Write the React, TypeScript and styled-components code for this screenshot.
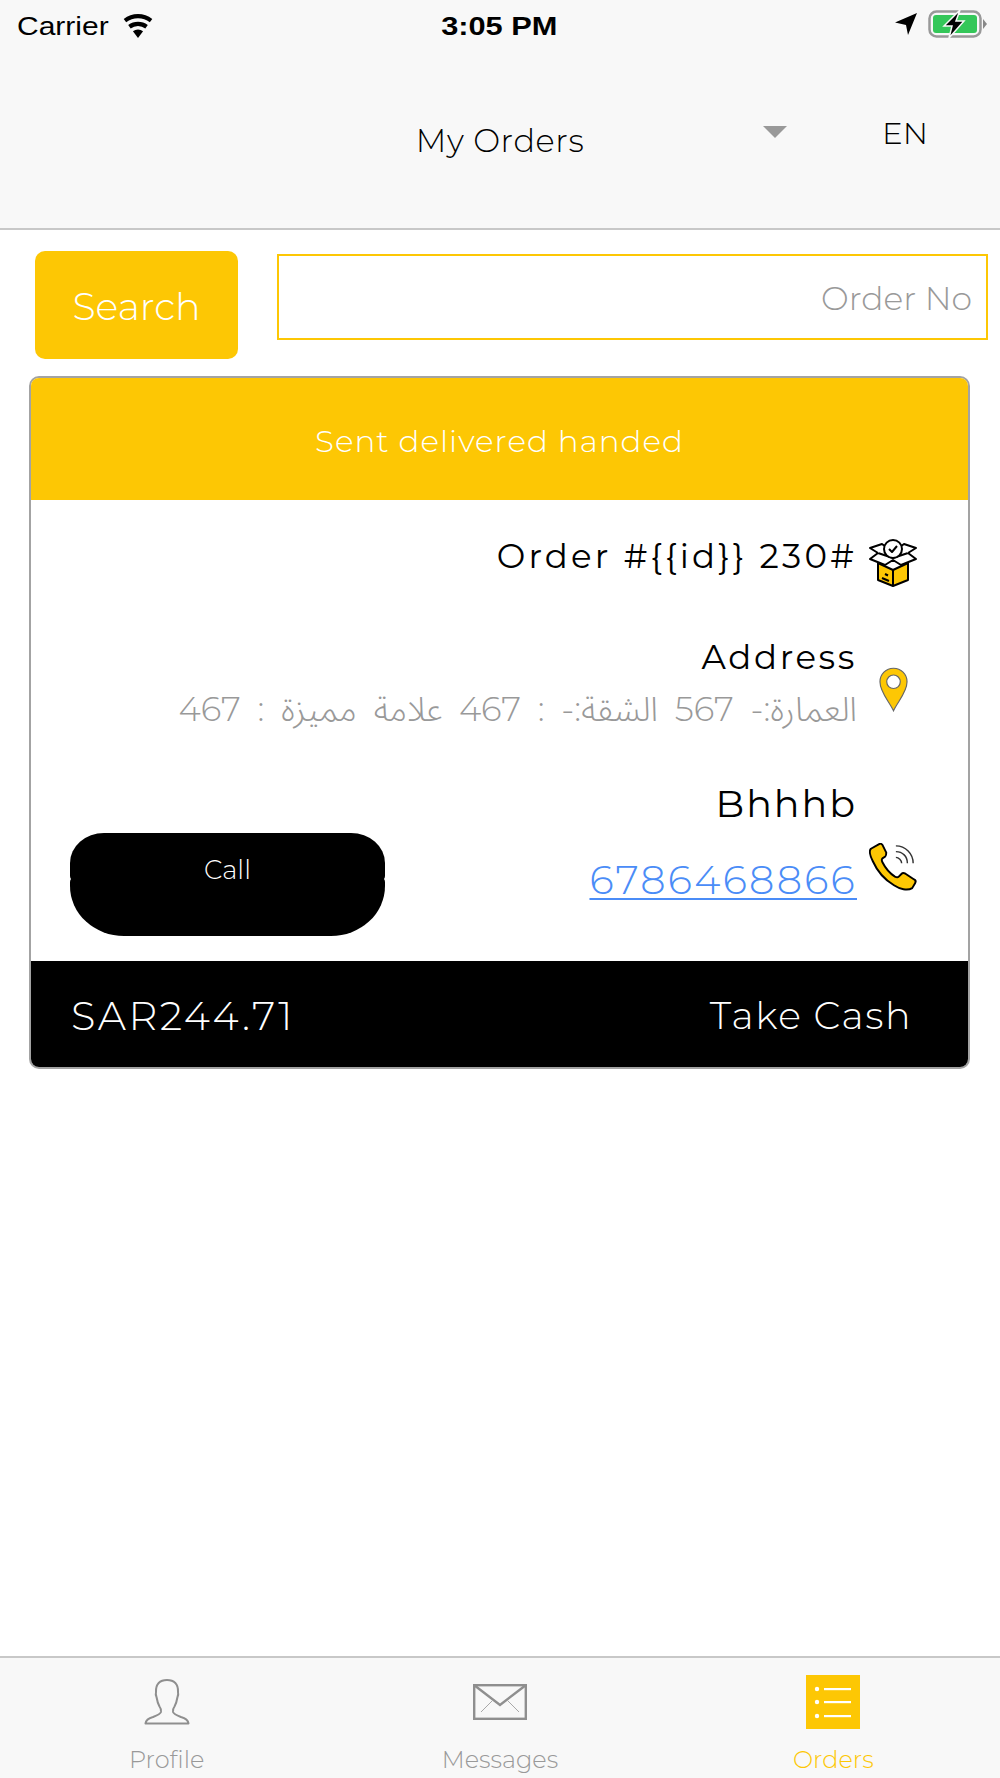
import React, { FC } from "react";
import styled, { createGlobalStyle } from "styled-components";

const YELLOW = "#fdc704";

const GlobalStyle = createGlobalStyle`
  html, body { margin: 0; padding: 0; background: #fff; }
  * { box-sizing: border-box; }
`;

const Page = styled.div`
  width: 1000px;
  height: 1778px;
  display: flex;
  flex-direction: column;
  font-family: "Montserrat", "Inter", "Noto Sans", "Noto Sans Arabic", "DejaVu Sans", sans-serif;
  font-weight: 300;
  color: #000;
  background: #fff;
  overflow: hidden;
`;

const TopArea = styled.header`
  height: 230px;
  background: #f8f8f8;
  border-bottom: 2px solid #c8c8c8;
  flex-shrink: 0;
`;

const StatusBar = styled.div`
  height: 52px;
  padding: 0 13px 0 17px;
  display: grid;
  grid-template-columns: 1fr auto 1fr;
  align-items: center;
  font-family: "Liberation Sans", Arial, sans-serif;
  font-weight: 400;
  font-size: 25px;
  svg { margin-bottom: 4px; display: block; }
`;

const StatusLeft = styled.div`
  display: flex;
  align-items: center;
  gap: 27px;
`;

const Carrier = styled.span`
  transform: scaleX(1.2);
  transform-origin: left center;
`;

const StatusTime = styled.div`
  font-weight: 700;
  transform: scaleX(1.23);
  margin-right: 5px;
`;

const StatusRight = styled.div`
  display: flex;
  justify-content: flex-end;
  align-items: center;
  gap: 11px;
`;

const NavBar = styled.div`
  position: relative;
  height: 176px;
`;

const NavTitle = styled.div`
  text-align: center;
  font-size: 32px;
  padding-top: 73px;
  letter-spacing: 0.6px;
  line-height: 1;
`;

const Caret = styled.span`
  position: absolute;
  left: 763px;
  top: 74px;
  border-left: 12.5px solid transparent;
  border-right: 12.5px solid transparent;
  border-top: 12px solid #999;
`;

const Lang = styled.span`
  position: absolute;
  left: 882px;
  top: 66px;
  font-size: 31px;
  line-height: 1;
`;

const SearchRow = styled.div`
  display: flex;
  align-items: flex-start;
  padding: 21px 12px 0 35px;
  gap: 39px;
`;

const SearchButton = styled.button`
  width: 203px;
  height: 108px;
  border: none;
  border-radius: 10px;
  background: ${YELLOW};
  color: #fff;
  font: inherit;
  font-size: 38px;
  padding: 2px 0 0;
`;

const SearchInput = styled.div`
  flex: 1;
  height: 86px;
  margin-top: 3px;
  border: 2px solid ${YELLOW};
  display: flex;
  align-items: center;
  justify-content: flex-end;
  padding: 2px 14px 0 0;
  color: #999;
  font-size: 33px;
`;

const Card = styled.section`
  margin: 17px 30px 0 29px;
  height: 693px;
  border: 2px solid #a3a3a3;
  border-radius: 10px;
  overflow: hidden;
  display: flex;
  flex-direction: column;
`;

const CardStatus = styled.div`
  height: 122px;
  background: ${YELLOW};
  color: #fff;
  display: flex;
  align-items: center;
  justify-content: center;
  font-size: 31px;
  letter-spacing: 1px;
  padding-top: 3px;
  flex-shrink: 0;
`;

const CardBody = styled.div`
  flex: 1;
  display: flex;
  flex-direction: column;
  padding-right: 51px;
`;

const InfoRow = styled.div<{ $h: number }>`
  height: ${(p) => p.$h}px;
  display: flex;
  justify-content: flex-end;
  align-items: flex-start;
`;

const InfoText = styled.div`
  display: flex;
  flex-direction: column;
  align-items: flex-end;
`;

const OrderNo = styled.div`
  font-size: 34px;
  font-weight: 400;
  letter-spacing: 3.2px;
  margin-top: 36px;
  line-height: 40px;
`;

const AddressTitle = styled.div`
  font-size: 34px;
  font-weight: 400;
  letter-spacing: 2.6px;
  line-height: 40px;
`;

const AddressLine = styled.div`
  direction: rtl;
  font-size: 34px;
  color: #999;
  letter-spacing: 2px;
  word-spacing: 8px;
  line-height: 48px;
  margin-top: 8px;
`;

const IconSlot = styled.div<{ $top: number; $right?: number }>`
  width: 60px;
  display: flex;
  justify-content: flex-end;
  padding-top: ${(p) => p.$top}px;
  padding-right: ${(p) => p.$right || 0}px;
`;

const PersonName = styled.div`
  font-size: 38px;
  font-weight: 400;
  letter-spacing: 2px;
  line-height: 48px;
  margin-top: 2px;
`;

const PhoneLink = styled.a`
  font-size: 40px;
  color: #4a8cf7;
  letter-spacing: 2.3px;
  text-decoration: underline;
  text-underline-offset: 4px;
  text-decoration-thickness: 2px;
  line-height: 48px;
  margin-top: 28px;
`;

const ContactRow = styled.div`
  display: flex;
  align-items: flex-start;
  justify-content: space-between;
  padding-left: 39px;
`;

const CallButton = styled.div`
  position: relative;
  width: 315px;
  height: 103px;
  margin-top: 55px;
  color: #fff;
  font-size: 26px;
  text-align: center;
  line-height: 74px;

  &::before, &::after {
    content: "";
    position: absolute;
    left: 0;
    right: 0;
    background: #000;
  }
  &::before { top: 0; height: 48px; border-radius: 34px 34px 5px 5px / 30px 30px 5px 5px; }
  &::after { top: 44px; bottom: 0; border-radius: 5px 5px 54px 54px / 5px 5px 50px 50px; }
`;

const CallLabel = styled.span`
  position: relative;
  z-index: 1;
`;

const CardFooter = styled.div`
  height: 106px;
  background: #000;
  color: #fff;
  display: flex;
  align-items: center;
  justify-content: space-between;
  padding: 3px 56px 0 40px;
  flex-shrink: 0;
`;

const Amount = styled.span`
  font-size: 40px;
  letter-spacing: 2.500px;
`;

const PayMethod = styled.span`
  font-size: 38px;
  letter-spacing: 1.500px;
`;

const Spacer = styled.div`
  flex: 1;
`;

const TabBar = styled.nav`
  height: 122px;
  background: #f8f8f8;
  border-top: 2px solid #c8c8c8;
  display: flex;
  flex-shrink: 0;
`;

const Tab = styled.div<{ $active?: boolean }>`
  flex: 1;
  display: flex;
  flex-direction: column;
  align-items: center;
  color: ${(p) => (p.$active ? YELLOW : "#999")};
  font-size: 24px;
`;

const TabIcon = styled.div`
  height: 88px;
  display: flex;
  align-items: center;
  justify-content: center;
`;

const TabLabel = styled.span`
  line-height: 32px;
  margin-top: -2px;
`;

const WifiIcon: FC = () => (
  <svg width="36" height="27" viewBox="0 0 30 24">
    <path d="M15 24l-4.500-6a7 7 0 0 1 9 0z" fill="#000" />
    <path d="M8.500 15.500a10.500 10.500 0 0 1 13 0l2.200-3a14.500 14.500 0 0 0-17.400 0z" fill="#000" />
    <path d="M4.500 10a17 17 0 0 1 21 0l2.200-3a20.500 20.500 0 0 0-25.400 0z" fill="#000" />
  </svg>
);

const ArrowIcon: FC = () => (
  <svg width="22" height="22" viewBox="0 0 22 22">
    <path d="M22 0L13 22l-2-10L0 9.500z" fill="#000" />
  </svg>
);

const BatteryIcon: FC = () => (
  <svg width="59" height="28" viewBox="0 0 59 28">
    <rect x="1.500" y="1.500" width="51" height="25" rx="7" fill="none" stroke="#999" strokeWidth="2.500" />
    <rect x="5" y="5" width="44" height="18" rx="3" fill="#34c759" />
    <path d="M55 9l4 5-4 5z" fill="#888" />
    <path d="M32 0L16 16h8l-3 12 15-17h-8z" fill="#000" stroke="#f8f8f8" strokeWidth="1.500" />
  </svg>
);

const BoxIcon: FC = () => (
  <svg width="48" height="48" viewBox="0 0 48 48" strokeLinejoin="round">
    <path d="M9 24l15 7 15-7v17l-15 6-15-6z" fill={YELLOW} stroke="#000" strokeWidth="2" />
    <path d="M24 31v16" stroke="#000" strokeWidth="2" />
    <path d="M24 19L9 14 1 20l15 6 8-5 8 5 15-6-8-6z" fill="#fff" stroke="#000" strokeWidth="2" />
    <path d="M9 14L1 9l12-4 4 3M39 14l8-5-12-4-4 3" fill="#fff" stroke="#000" strokeWidth="2" />
    <circle cx="24" cy="10" r="9" fill="#fff" stroke="#000" strokeWidth="2" />
    <path d="M20 10l3 3 5-6" fill="none" stroke="#000" strokeWidth="2" />
    <path d="M13 39l7 3M16 35l3 1.500" stroke="#000" strokeWidth="2" />
  </svg>
);

const PinIcon: FC = () => (
  <svg width="29" height="45" viewBox="0 0 30 46">
    <path d="M15 45C11 36 1 26 1 15a14 14 0 0 1 28 0c0 11-10 21-14 30z" fill={YELLOW} stroke="#666" strokeWidth="1.200" />
    <circle cx="15" cy="15" r="7" fill="#fff" stroke="#666" strokeWidth="1.200" />
  </svg>
);

const PhoneIcon: FC = () => (
  <svg width="48" height="48" viewBox="0 0 50 50">
    <path d="M11 1L2 6C0 8 1 13 4 19c4 9 12 19 22 25 6 4 14 6 19 3l3-5c1-2 1-3-1-4l-9-6c-2-1-3-1-4 0l-3 3c-1 1-2 1-4 0-6-4-10-9-13-15-1-2-1-3 0-4l3-2c1-1 1-2 1-4L14 2c-1-1-2-2-3-1z" fill={YELLOW} stroke="#000" strokeWidth="2" strokeLinejoin="round" />
    <path d="M28 15c3 0 6 3 6 6M28 9c7 0 12 5 12 12M28 3c10 0 18 8 18 18" fill="none" stroke="#333" strokeWidth="1.500" />
  </svg>
);

const ProfileIcon: FC = () => (
  <svg width="46" height="46" viewBox="0 0 46 46">
    <path d="M1.500 44.500C2 41 5 39 9 38C13 36.500 16 35.500 17 33C17.500 31 17 29.500 15.500 27.500C14 25 13 21 12.500 18C12 17 11.500 15 12 13C11.500 5 16 1 23 1C30 1 34.500 5 34 13C34.500 15 34 17 33.500 18C33 21 32 25 30.500 27.500C29 29.500 28.500 31 29 33C30 35.500 33 36.500 37 38C41 39 44 41 44.500 44.500Z" fill="none" stroke="#8f8f8f" strokeWidth="2" strokeLinejoin="round" />
  </svg>
);

const MailIcon: FC = () => (
  <svg width="54" height="36" viewBox="0 0 54 36">
    <rect x="1.200" y="1.200" width="51.600" height="33.600" fill="none" stroke="#8f8f8f" strokeWidth="2.400" />
    <path d="M1 1l26 20L53 1" fill="none" stroke="#8f8f8f" strokeWidth="2.400" />
    <path d="M20 16L8 28M34 16l12 12" fill="none" stroke="#a8a8a8" strokeWidth="1" />
  </svg>
);

const OrdersIcon: FC = () => (
  <svg width="54" height="54" viewBox="0 0 54 54">
    <rect width="54" height="54" fill={YELLOW} />
    {[14, 27, 41].map((y) => (
      <g key={y} fill="#fff">
        <circle cx="11" cy={y} r="2.200" />
        <rect x="18" y={y - 1} width="27" height="2.200" />
      </g>
    ))}
  </svg>
);

export default function App() {
  return (
    <Page>
      <GlobalStyle />
      <TopArea>
        <StatusBar>
          <StatusLeft>
            <Carrier>Carrier</Carrier>
            <WifiIcon />
          </StatusLeft>
          <StatusTime>3:05 PM</StatusTime>
          <StatusRight>
            <ArrowIcon />
            <BatteryIcon />
          </StatusRight>
        </StatusBar>
        <NavBar>
          <NavTitle>My Orders</NavTitle>
          <Caret />
          <Lang>EN</Lang>
        </NavBar>
      </TopArea>

      <SearchRow>
        <SearchButton>Search</SearchButton>
        <SearchInput>Order No</SearchInput>
      </SearchRow>

      <Card>
        <CardStatus>Sent delivered handed</CardStatus>
        <CardBody>
          <InfoRow $h={137}>
            <OrderNo>Order #{"{{id}}"} 230#</OrderNo>
            <IconSlot $top={39}>
              <BoxIcon />
            </IconSlot>
          </InfoRow>
          <InfoRow $h={141}>
            <InfoText>
              <AddressTitle>Address</AddressTitle>
              <AddressLine>العمارة:- 567 الشقة:- : 467 علامة مميزة : 467</AddressLine>
            </InfoText>
            <IconSlot $top={30} $right={9}>
              <PinIcon />
            </IconSlot>
          </InfoRow>
          <ContactRow>
            <CallButton>
              <CallLabel>Call</CallLabel>
            </CallButton>
            <InfoRow $h={180}>
              <InfoText>
                <PersonName>Bhhhb</PersonName>
                <PhoneLink>6786468866</PhoneLink>
              </InfoText>
              <IconSlot $top={65}>
                <PhoneIcon />
              </IconSlot>
            </InfoRow>
          </ContactRow>
        </CardBody>
        <CardFooter>
          <Amount>SAR244.71</Amount>
          <PayMethod>Take Cash</PayMethod>
        </CardFooter>
      </Card>

      <Spacer />

      <TabBar>
        <Tab>
          <TabIcon>
            <ProfileIcon />
          </TabIcon>
          <TabLabel>Profile</TabLabel>
        </Tab>
        <Tab>
          <TabIcon>
            <MailIcon />
          </TabIcon>
          <TabLabel>Messages</TabLabel>
        </Tab>
        <Tab $active>
          <TabIcon>
            <OrdersIcon />
          </TabIcon>
          <TabLabel>Orders</TabLabel>
        </Tab>
      </TabBar>
    </Page>
  );
}
